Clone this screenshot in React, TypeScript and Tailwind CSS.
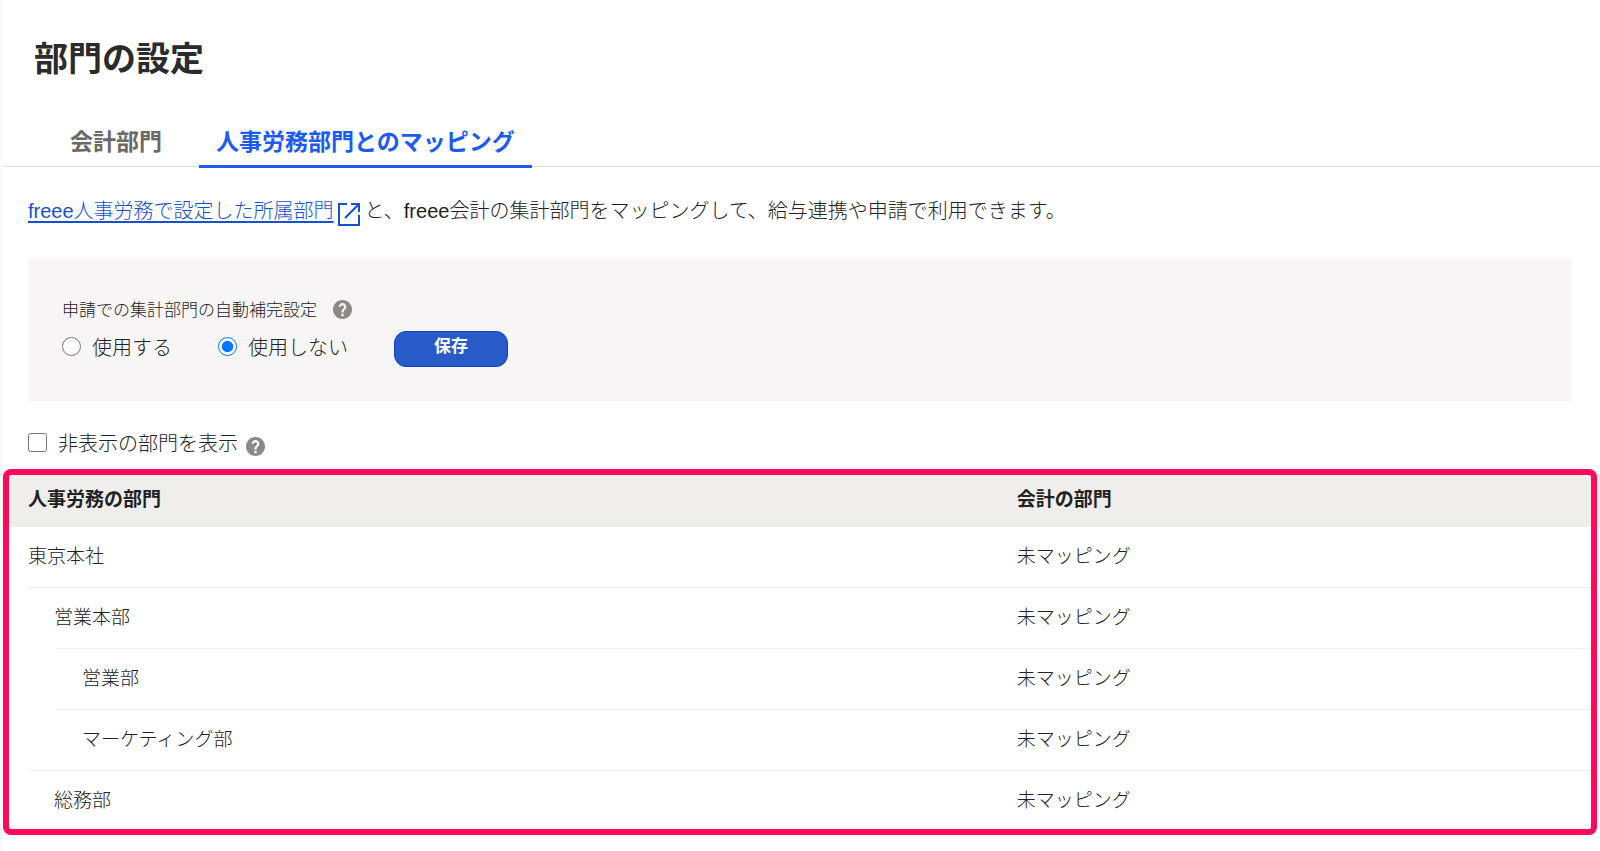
import { useState } from "react";

const departments = [
  { name: "東京本社", depth: 0 },
  { name: "営業本部", depth: 1 },
  { name: "営業部", depth: 2 },
  { name: "マーケティング部", depth: 2 },
  { name: "総務部", depth: 1 },
];

// the row border starts where the parent's name starts
const indents = ["pl-0", "pl-[26px]", "pl-[54px]"];

function HelpIcon() {
  return (
    <svg className="size-[19px]" viewBox="2 2 20 20" role="img" aria-label="ヘルプ">
      <path
        fill="#8c8989"
        d="M12 2C6.48 2 2 6.48 2 12s4.480 10 10 10 10-4.480 10-10S17.520 2 12 2zm1.200 17h-2.400v-2.400h2.400V19zm2.100-7.600-.9.920C13.600 13.100 13.200 13.600 13.200 15.100h-2.400v-.5c0-1.100.4-2.100 1.100-2.830l1.200-1.260c.37-.36.59-.76.59-1.310 0-.95-.75-1.700-1.700-1.700s-1.700.75-1.700 1.700H7.900c0-2.260 1.840-4.100 4.100-4.100s4.100 1.840 4.100 4.100c0 .88-.3 1.660-.8 2.200z"
      />
    </svg>
  );
}

function ExternalIcon() {
  return (
    <svg className="mt-1.5 size-6" viewBox="0 0 24 24" fill="none" stroke="#1650d0" strokeWidth="2" aria-hidden="true">
      <path d="M10 2H2v21h20V13" />
      <path d="M14 2h8v8M22 2 8 16" />
    </svg>
  );
}

export default function App() {
  const [autofill, setAutofill] = useState("off");
  const [showHidden, setShowHidden] = useState(false);

  return (
    <div className="min-h-screen border-l-2 border-[#f9f9f9] bg-white font-['Liberation_Sans','Noto_Sans_CJK_JP',sans-serif] text-xl font-light text-[#222]">
      <h1 className="px-8 pt-8 text-[34px] leading-[54px] font-bold text-[#2b2b2b]">部門の設定</h1>

      <nav className="mt-[30px] flex gap-px border-b border-[#e1e1e1] px-8 text-[23px] leading-[34px] font-bold">
        <a href="#accounting" className="px-9 pt-[9px] pb-[7px] text-[#6b6868]">
          会計部門
        </a>
        <a href="#mapping" className="-mb-0.5 border-b-3 border-[#1c5af2] px-[17px] pt-[9px] text-[#1c5af2]">
          人事労務部門とのマッピング
        </a>
      </nav>

      <main>
        <p className="flex items-center px-[26px] pt-7 leading-8">
          <a href="#hr" className="flex items-center gap-[3px] text-[#1650d0]">
            <span className="underline decoration-2 underline-offset-3">freee人事労務で設定した所属部門</span>
            <ExternalIcon />
          </a>
          <span className="ml-1">と、freee会計の集計部門をマッピングして、給与連携や申請で利用できます。</span>
        </p>

        <form className="mr-7 ml-[26px] mt-[31px] bg-[#f7f5f6] px-[34px] pt-[41px] pb-[34px]" onSubmit={(e) => e.preventDefault()}>
          <div className="flex items-center gap-4 text-[17px] leading-6">
            <span id="autofill-label">申請での集計部門の自動補完設定</span>
            <span className="mb-1">
              <HelpIcon />
            </span>
          </div>
          <div className="mt-2 flex items-center leading-8" role="radiogroup" aria-labelledby="autofill-label">
            <label className="mr-[46px] mb-0.5 flex items-center gap-[11px]">
              <input type="radio" name="autofill" className="mb-1 size-[19px]" checked={autofill === "on"} onChange={() => setAutofill("on")} />
              使用する
            </label>
            <label className="mr-[46px] mb-0.5 flex items-center gap-[11px]">
              <input type="radio" name="autofill" className="mb-1 size-[19px]" checked={autofill === "off"} onChange={() => setAutofill("off")} />
              使用しない
            </label>
            <button
              type="submit"
              className="h-9 w-[114px] rounded-xl border border-[#0d45c4] bg-[#285ac8] pb-1 text-[17px] leading-6 font-bold text-white"
            >
              保存
            </button>
          </div>
        </form>

        <div className="flex items-center gap-2 px-[26px] pt-[27px] pb-[13px] leading-8">
          <label className="flex items-center gap-[11px]">
            <input type="checkbox" className="mb-1 size-[19px]" checked={showHidden} onChange={(e) => setShowHidden(e.target.checked)} />
            非表示の部門を表示
          </label>
          <span className="mt-1">
            <HelpIcon />
          </span>
        </div>

        <div className="relative">
          <table className="w-full table-fixed border-separate border-spacing-0 text-[19px] leading-7">
            <thead className="bg-[#efeeec] text-left">
              <tr>
                <th className="w-[63.5%] pt-[13px] pb-3 pl-[26px] font-bold">人事労務の部門</th>
                <th className="pt-[13px] pb-3 font-bold">会計の部門</th>
              </tr>
            </thead>
            <tbody>
              {departments.map((d) => (
                <tr key={d.name}>
                  <td className={indents[d.depth]}>
                    <div className="border-t border-[#efefef] py-4 pl-[26px]">{d.name}</div>
                  </td>
                  <td className="border-t border-[#efefef] py-4">未マッピング</td>
                </tr>
              ))}
            </tbody>
          </table>
          <div className="pointer-events-none absolute -inset-y-1 right-[3px] left-px rounded-lg border-6 border-[#ff0a5a]" />
        </div>
      </main>
    </div>
  );
}
